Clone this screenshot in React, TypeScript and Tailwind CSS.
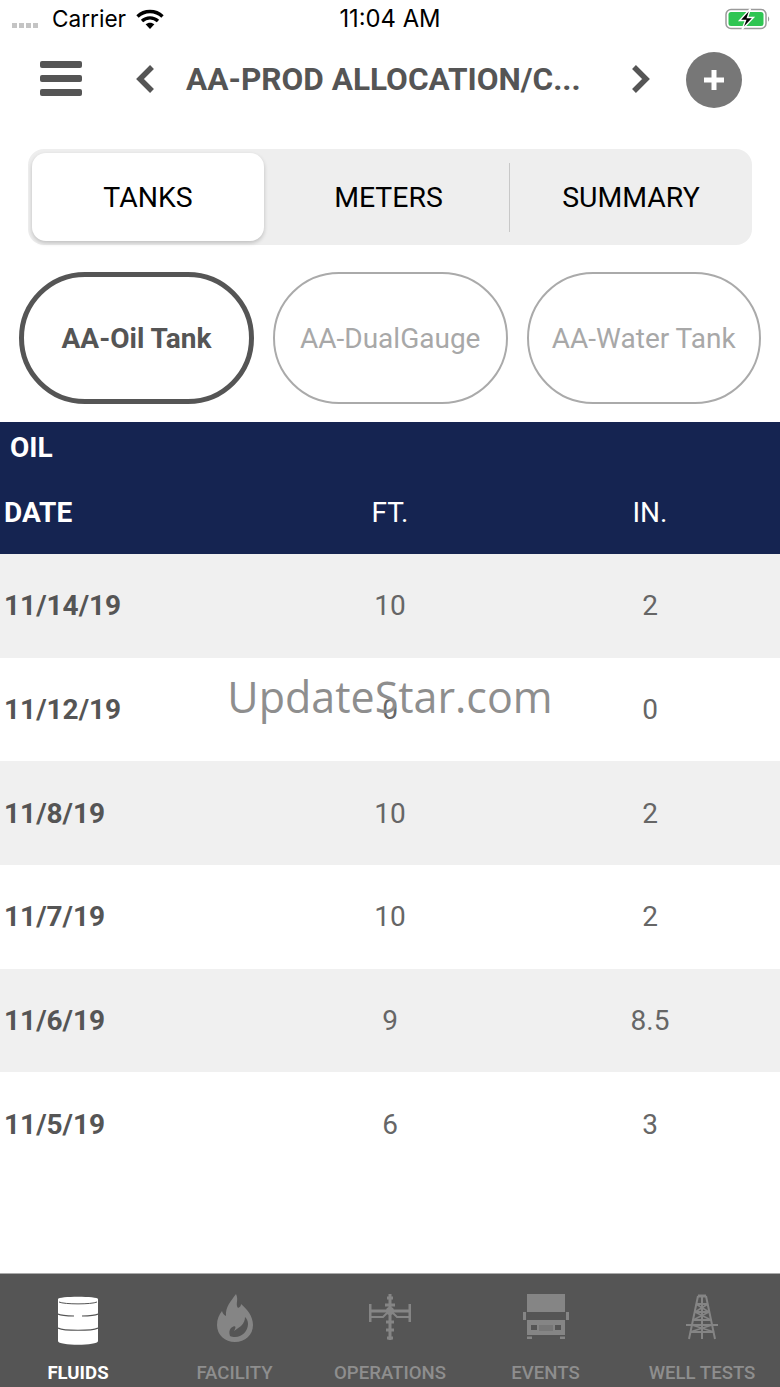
import { FC } from 'react';

const rows = [
  { date: '11/14/19', ft: '10', inch: '2' },
  { date: '11/12/19', ft: '0', inch: '0' },
  { date: '11/8/19', ft: '10', inch: '2' },
  { date: '11/7/19', ft: '10', inch: '2' },
  { date: '11/6/19', ft: '9', inch: '8.5' },
  { date: '11/5/19', ft: '6', inch: '3' },
];

const WifiIcon: FC = () => (
  <svg width="28" height="22" viewBox="0 0 28 22" fill="none" stroke="#000" strokeWidth="3.4">
    <path d="M1.5 8.5C8.5 1.8 19.5 1.8 26.5 8.5" />
    <path d="M6 13C10.6 8.8 17.4 8.8 22 13" />
    <path d="M14 21L9.6 16.3C12.2 14.2 15.8 14.2 18.4 16.3Z" fill="#000" stroke="none" />
  </svg>
);

const BatteryIcon: FC = () => (
  <svg width="46" height="24" viewBox="0 0 46 24" fill="none">
    <rect x="1" y="2.5" width="40" height="19" rx="5" stroke="#9a9a9a" strokeWidth="1.5" />
    <rect x="3.5" y="5" width="35" height="14" rx="2.5" fill="#2fc552" />
    <path d="M43 9.5c1.6.5 1.6 4.5 0 5z" fill="#9a9a9a" />
    <path d="M25.5 1.5L14.5 13.5H20.5L17 22.5L28.5 10.5H22.5Z" fill="#000" stroke="#fff" strokeWidth="1.4" />
  </svg>
);

const DbIcon: FC = () => (
  <svg width="40" height="52" viewBox="0 0 40 52" fill="#fff">
    <path d="M0 5C0 2 40 2 40 5V47C40 52 0 52 0 47Z" />
    <path d="M1 8C6 10.500 34 10.500 39 8" fill="none" stroke="#555" strokeWidth="1" />
    <path d="M0 20C3 21.500 10 21.800 16 22M24 22C30 21.800 37 21.500 40 20" fill="none" stroke="#555" strokeWidth="1.200" />
    <path d="M0 34C6 37 34 37 40 34" fill="none" stroke="#555" strokeWidth="1.200" />
  </svg>
);

const FlameIcon: FC = () => (
  <svg width="36" height="48" viewBox="0 0 36 48" fill="#858585">
    <path d="M19 0C22 6 18 10 21 14C23 13 24 12 24 10C30 15 36 22 36 31C36 41 28 48 18 48C8 48 0 41 0 31C0 25 2 21 5 17C6 20 7 21 9 22C8 13 14 7 19 0Z" />
    <path d="M18 43C25 43 31 37 31 30C31 27 30 25 28 23C28 30 23 33 17 37C20 32 18 31 14 34C12 36 12 39 13 42C14.500 42.700 16 43 18 43Z" fill="#555" />
  </svg>
);

const ValveIcon: FC = () => (
  <svg width="42" height="46" viewBox="0 0 42 46" fill="none" stroke="#858585" strokeWidth="2">
    <path d="M21 0V46M18 4H24M18 44H24M16 11H26" strokeWidth="3" />
    <path d="M1 10V28M41 10V28" strokeWidth="3" />
    <path d="M1 17H41" strokeWidth="3" />
    <path d="M2 23H14L20 17M40 23H28L22 17" />
    <circle cx="21" cy="17" r="4" fill="#858585" stroke="none" />
    <path d="M17 28H25M17 36H25" strokeWidth="3" />
  </svg>
);

const TruckIcon: FC = () => (
  <svg width="46" height="46" viewBox="0 0 46 46" fill="#858585">
    <rect x="4" y="0" width="38" height="18" />
    <rect x="0" y="18" width="3" height="8" />
    <rect x="43" y="18" width="3" height="8" />
    <path d="M9 19H37L40 25H6Z" fill="#555" />
    <path d="M4 26H42V41H4Z" />
    <rect x="8" y="31" width="6" height="5" fill="#555" />
    <rect x="32" y="31" width="6" height="5" fill="#555" />
    <rect x="16" y="31" width="14" height="6" fill="#777" />
    <rect x="4" y="41" width="38" height="1.500" fill="#555" />
    <path d="M4 42.500H9V45H4ZM37 42.500H42V45H37Z" />
  </svg>
);

const DerrickIcon: FC = () => (
  <svg width="34" height="46" viewBox="0 0 34 46" fill="none" stroke="#858585" strokeWidth="2">
    <path d="M13 2H21" strokeWidth="3" />
    <path d="M13 2L4 45M21 2L30 45M17 2V45" />
    <path d="M11 10H23M9.500 18H24.500M7.500 26H26.500M1 31H33M5 38H29" />
    <path d="M11 10L24 18M23 10L10 18M10 18L26 26M24 18L8 26M7 31L29 38M27 31L5 38" strokeWidth="1.5" />
  </svg>
);

const navItems = [
  { label: 'FLUIDS', icon: <DbIcon />, active: true, slot: 'w-[156px]' },
  { label: 'FACILITY', icon: <FlameIcon />, active: false, slot: 'w-[157px]' },
  { label: 'OPERATIONS', icon: <ValveIcon />, active: false, slot: 'w-[154px]' },
  { label: 'EVENTS', icon: <TruckIcon />, active: false, slot: 'w-[157px]' },
  { label: 'WELL TESTS', icon: <DerrickIcon />, active: false, slot: 'w-[156px]' },
];

const App: FC = () => {
  return (
    <div className="relative w-[780px] h-[1387px] bg-white overflow-hidden flex flex-col font-['Roboto',sans-serif]">
      {/* status bar */}
      <div className="h-[38px] flex items-center relative pl-[12px] pr-[9px] font-['Inter',sans-serif] text-[22.6px] text-black">
        <div className="flex gap-[2px] items-center mt-[12px]">
          <span className="w-[5px] h-[5px] bg-[#c4c4c4]" />
          <span className="w-[5px] h-[5px] bg-[#c4c4c4]" />
          <span className="w-[5px] h-[5px] bg-[#c4c4c4]" />
          <span className="w-[5px] h-[5px] bg-[#c4c4c4]" />
        </div>
        <span className="ml-[14px]">Carrier</span>
        <span className="ml-[10px]"><WifiIcon /></span>
        <span className="absolute left-0 right-0 text-center text-[23.8px]">11:04 AM</span>
        <span className="ml-auto"><BatteryIcon /></span>
      </div>

      {/* header */}
      <div className="h-[84px] flex items-start pt-[14px]">
        <div className="ml-[40px] mt-[9px] w-[42px] flex flex-col gap-[7px]">
          <span className="h-[7px] rounded-[2px] bg-[#555]" />
          <span className="h-[7px] rounded-[2px] bg-[#555]" />
          <span className="h-[7px] rounded-[2px] bg-[#555]" />
        </div>
        <svg className="ml-[54px] mt-[12px]" width="19" height="30" viewBox="0 0 19 30" fill="none" stroke="#555" strokeWidth="5.500">
          <path d="M16 3L4 15L16 27" />
        </svg>
        <div className="ml-[31px] w-[393px] mt-[9px] text-[31.6px] leading-[38px] font-bold text-[#555] whitespace-nowrap">AA-PROD ALLOCATION/C...</div>
        <svg className="ml-[52px] mt-[12px]" width="19" height="30" viewBox="0 0 19 30" fill="none" stroke="#555" strokeWidth="5.500">
          <path d="M3 3L15 15L3 27" />
        </svg>
        <div className="ml-[36px] w-[56px] h-[56px] rounded-full bg-[#777] flex items-center justify-center">
          <svg width="20" height="20" viewBox="0 0 20 20" fill="#fff">
            <path d="M7.500 0H12.500V7.500H20V12.500H12.500V20H7.500V12.500H0V7.500H7.500Z" />
          </svg>
        </div>
      </div>

      {/* segmented control */}
      <div className="mt-[27px] ml-[28px] w-[724px] h-[96px] rounded-[16px] bg-[#eeeeee] flex items-center p-[4px] text-[28.4px] text-black">
        <div className="w-[232px] h-[88px] pt-[2px] rounded-[14px] bg-white shadow-[0_2px_4px_rgba(0,0,0,0.2)] flex items-center justify-center">TANKS</div>
        <div className="w-[246px] h-[69px] pt-[2px] pl-[4px] border-r border-[#c8c8c8] flex items-center justify-center">METERS</div>
        <div className="flex-1 pt-[2px] pl-[4px] flex items-center justify-center">SUMMARY</div>
      </div>

      {/* tank pills */}
      <div className="mt-[27px] ml-[19px] flex gap-[19px] text-[28px]">
        <div className="w-[235px] h-[132px] pt-[1px] rounded-[66px] border-[5px] border-[#555] flex items-center justify-center font-bold text-[#555]">AA-Oil Tank</div>
        <div className="w-[234.5px] h-[132px] pt-[1px] rounded-[66px] border-2 border-[#aaaaaa] flex items-center justify-center text-[#a8a8a8]">AA-DualGauge</div>
        <div className="w-[234.5px] h-[132px] pt-[1px] rounded-[66px] border-2 border-[#aaaaaa] flex items-center justify-center text-[#a8a8a8]">AA-Water Tank</div>
      </div>

      {/* table */}
      <div className="mt-[18px] h-[132px] bg-[#152451] text-white text-[28px]">
        <div className="h-[52px] pl-[10px] flex items-center font-bold">OIL</div>
        <div className="h-[76px] pt-[1px] flex items-center">
          <div className="w-[260px] pl-[4px] font-bold">DATE</div>
          <div className="w-[260px] text-center">FT.</div>
          <div className="w-[260px] text-center">IN.</div>
        </div>
      </div>
      {rows.map((row, i) => (
        <div key={row.date} className={`h-[103.7px] pt-[1px] flex items-center text-[28px] text-[#666] ${i % 2 === 0 ? 'bg-[#f0f0f0]' : 'bg-white'}`}>
          <div className="w-[260px] pl-[4px] font-bold text-[#555]">{row.date}</div>
          <div className="w-[260px] text-center">{row.ft}</div>
          <div className="w-[260px] text-center">{row.inch}</div>
        </div>
      ))}

      {/* watermark */}
      <div className="absolute left-0 right-0 top-[668px] text-center text-[43px] leading-[58px] text-[#8e8e8e] font-['Open_Sans',sans-serif]">UpdateStar.com</div>

      {/* bottom nav */}
      <div className="absolute left-0 right-0 bottom-0 h-[114px] bg-[#555] border-t-[1.5px] border-[#aaa] flex">
        {navItems.map((item) => (
          <div key={item.label} className={`${item.slot} flex flex-col items-center`}>
            <div className="h-[72px] pt-[20px] flex items-start justify-center">{item.icon}</div>
            <div className={`text-[18.6px] leading-[24px] mt-[15px] whitespace-nowrap ${item.active ? 'text-white font-bold' : 'text-[#8e8e8e] font-medium'}`}>{item.label}</div>
          </div>
        ))}
      </div>
    </div>
  );
};

export default App;
